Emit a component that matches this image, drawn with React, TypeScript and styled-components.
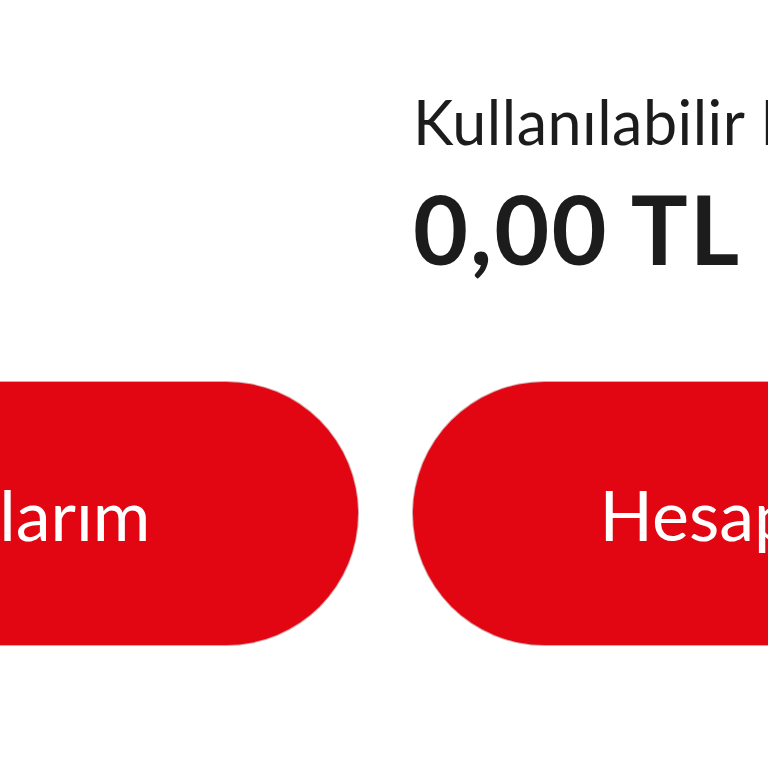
import styled, {createGlobalStyle} from 'styled-components'

const GlobalStyle = createGlobalStyle`
  html, body {
    margin: 0;
    padding: 0;
    background: #ffffff;
  }
  body {
    font-family: Lato, "Open Sans", sans-serif;
    color: #1c1c1c;
  }
`

function Balance() {
  return (
    <BalanceBlock>
      <Label>Kullanılabilir Bakiye</Label>
      <Amount>0,00 TL</Amount>
    </BalanceBlock>
  )
}

export default function App() {
  return (
    <Viewport>
      <GlobalStyle />
      <Board>
        <EmptyCell />
        <Balance />
        <PillButton>Kartlarım</PillButton>
        <PillButton>Hesaplarım</PillButton>
      </Board>
    </Viewport>
  )
}

const Viewport = styled.div`
  width: 768px;
  height: 768px;
  overflow: hidden;
  background: #ffffff;
`

const Board = styled.div`
  display: grid;
  grid-template-columns: 698px 718px;
  column-gap: 55px;
  row-gap: 106px;
  margin-left: -340px;
  padding-top: 91px;
`

const EmptyCell = styled.div``

const BalanceBlock = styled.div`
  display: flex;
  flex-direction: column;
  gap: 29px;
  white-space: nowrap;
`

const Label = styled.div`
  font-size: 61px;
  line-height: 1;
  font-weight: 400;
  letter-spacing: 0.5px;
  color: #1c1c1c;
`

const Amount = styled.div`
  font-size: 95px;
  line-height: 1;
  font-weight: 700;
  letter-spacing: 2px;
  color: #1c1c1c;
`

const PillButton = styled.button`
  height: 263px;
  border: 0;
  border-radius: 132px;
  background: #e20613;
  box-shadow: 0 0 0 1px rgba(140, 10, 20, 0.35);
  color: #ffffff;
  font-family: Lato, "Open Sans", sans-serif;
  font-size: 70px;
  font-weight: 400;
  cursor: pointer;
  white-space: nowrap;
`
